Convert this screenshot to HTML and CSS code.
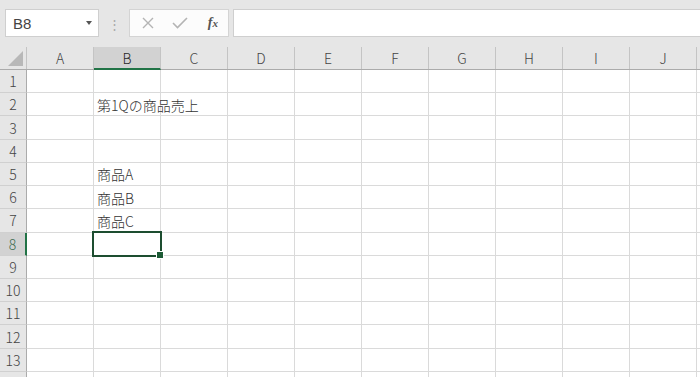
FILE: index.html
```html
<!DOCTYPE html>
<html lang="ja">
<head>
    <meta charset="UTF-8">
    <meta name="viewport" content="width=device-width, initial-scale=1.0">
    <title>Book1 - Excel</title>
    <link rel="stylesheet" href="styles.css">
</head>
<body>
    <div class="formula-bar">
        <div class="name-box">
            <span class="name-text">B8</span>
            <span class="name-arrow"></span>
        </div>
        <div class="grip">⋮</div>
        <div class="fx-tools">
            <svg class="tool-icon" width="12" height="12" viewBox="0 0 12 12">
                <path d="M1 1 L11 11 M11 1 L1 11" stroke="#b4b4b4" stroke-width="1.4" fill="none"/>
            </svg>
            <svg class="tool-icon" width="16" height="12" viewBox="0 0 16 12">
                <path d="M1 6 L5.5 10.5 L15 1" stroke="#b4b4b4" stroke-width="1.6" fill="none"/>
            </svg>
            <span class="fx-label">f<sub>x</sub></span>
        </div>
        <div class="formula-input"></div>
    </div>

    <div class="sheet">
        <div class="row head-row">
            <div class="corner"><span class="corner-tri"></span></div>
            <div class="col-head">A</div>
            <div class="col-head selected">B</div>
            <div class="col-head">C</div>
            <div class="col-head">D</div>
            <div class="col-head">E</div>
            <div class="col-head">F</div>
            <div class="col-head">G</div>
            <div class="col-head">H</div>
            <div class="col-head">I</div>
            <div class="col-head">J</div>
            <div class="col-head filler"></div>
        </div>
        <div class="row"><div class="row-head">1</div><div class="cell"></div><div class="cell"></div><div class="cell"></div><div class="cell"></div><div class="cell"></div><div class="cell"></div><div class="cell"></div><div class="cell"></div><div class="cell"></div><div class="cell"></div><div class="cell filler"></div></div>
        <div class="row"><div class="row-head">2</div><div class="cell"></div><div class="cell text">第1Qの商品売上</div><div class="cell"></div><div class="cell"></div><div class="cell"></div><div class="cell"></div><div class="cell"></div><div class="cell"></div><div class="cell"></div><div class="cell"></div><div class="cell filler"></div></div>
        <div class="row"><div class="row-head">3</div><div class="cell"></div><div class="cell"></div><div class="cell"></div><div class="cell"></div><div class="cell"></div><div class="cell"></div><div class="cell"></div><div class="cell"></div><div class="cell"></div><div class="cell"></div><div class="cell filler"></div></div>
        <div class="row"><div class="row-head">4</div><div class="cell"></div><div class="cell"></div><div class="cell"></div><div class="cell"></div><div class="cell"></div><div class="cell"></div><div class="cell"></div><div class="cell"></div><div class="cell"></div><div class="cell"></div><div class="cell filler"></div></div>
        <div class="row"><div class="row-head">5</div><div class="cell"></div><div class="cell text">商品A</div><div class="cell"></div><div class="cell"></div><div class="cell"></div><div class="cell"></div><div class="cell"></div><div class="cell"></div><div class="cell"></div><div class="cell"></div><div class="cell filler"></div></div>
        <div class="row"><div class="row-head">6</div><div class="cell"></div><div class="cell text">商品B</div><div class="cell"></div><div class="cell"></div><div class="cell"></div><div class="cell"></div><div class="cell"></div><div class="cell"></div><div class="cell"></div><div class="cell"></div><div class="cell filler"></div></div>
        <div class="row"><div class="row-head">7</div><div class="cell"></div><div class="cell text">商品C</div><div class="cell"></div><div class="cell"></div><div class="cell"></div><div class="cell"></div><div class="cell"></div><div class="cell"></div><div class="cell"></div><div class="cell"></div><div class="cell filler"></div></div>
        <div class="row"><div class="row-head selected">8</div><div class="cell"></div><div class="cell active"></div><div class="cell"></div><div class="cell"></div><div class="cell"></div><div class="cell"></div><div class="cell"></div><div class="cell"></div><div class="cell"></div><div class="cell"></div><div class="cell filler"></div></div>
        <div class="row"><div class="row-head">9</div><div class="cell"></div><div class="cell"></div><div class="cell"></div><div class="cell"></div><div class="cell"></div><div class="cell"></div><div class="cell"></div><div class="cell"></div><div class="cell"></div><div class="cell"></div><div class="cell filler"></div></div>
        <div class="row"><div class="row-head">10</div><div class="cell"></div><div class="cell"></div><div class="cell"></div><div class="cell"></div><div class="cell"></div><div class="cell"></div><div class="cell"></div><div class="cell"></div><div class="cell"></div><div class="cell"></div><div class="cell filler"></div></div>
        <div class="row"><div class="row-head">11</div><div class="cell"></div><div class="cell"></div><div class="cell"></div><div class="cell"></div><div class="cell"></div><div class="cell"></div><div class="cell"></div><div class="cell"></div><div class="cell"></div><div class="cell"></div><div class="cell filler"></div></div>
        <div class="row"><div class="row-head">12</div><div class="cell"></div><div class="cell"></div><div class="cell"></div><div class="cell"></div><div class="cell"></div><div class="cell"></div><div class="cell"></div><div class="cell"></div><div class="cell"></div><div class="cell"></div><div class="cell filler"></div></div>
        <div class="row"><div class="row-head">13</div><div class="cell"></div><div class="cell"></div><div class="cell"></div><div class="cell"></div><div class="cell"></div><div class="cell"></div><div class="cell"></div><div class="cell"></div><div class="cell"></div><div class="cell"></div><div class="cell filler"></div></div>
        <div class="row"><div class="row-head"></div><div class="cell"></div><div class="cell"></div><div class="cell"></div><div class="cell"></div><div class="cell"></div><div class="cell"></div><div class="cell"></div><div class="cell"></div><div class="cell"></div><div class="cell"></div><div class="cell filler"></div></div>
    </div>
</body>
</html>
```

FILE: styles.css
```css
* {
    margin: 0;
    padding: 0;
    box-sizing: border-box;
}

body {
    width: 700px;
    height: 377px;
    overflow: hidden;
    background: #ffffff;
    font-family: 'Noto Sans CJK JP', 'Noto Sans', sans-serif;
    color: #333;
}

/* formula bar */
.formula-bar {
    display: flex;
    align-items: center;
    height: 47px;
    padding: 0 0 1px 5px;
    background: #e6e6e6;
}

.name-box {
    display: flex;
    align-items: center;
    justify-content: space-between;
    width: 94px;
    height: 28px;
    padding: 0 6px 0 7px;
    background: #fff;
    border: 1px solid #cfcfcf;
}

.name-text {
    font-family: 'Liberation Sans', Arial, sans-serif;
    font-size: 15px;
    color: #444;
}

.name-arrow {
    width: 0;
    height: 0;
    border-left: 3.5px solid transparent;
    border-right: 3.5px solid transparent;
    border-top: 4px solid #555;
}

.grip {
    width: 30px;
    text-align: center;
    color: #a8a8a8;
    font-size: 13px;
}

.fx-tools {
    display: flex;
    align-items: center;
    width: 100px;
    height: 28px;
    padding: 0 10px 0 12px;
    gap: 18px;
    background: #fcfcfc;
    border: 1px solid #d4d4d4;
}

.tool-icon {
    display: block;
}

.fx-label {
    margin-left: auto;
    font-family: 'Liberation Serif', 'Times New Roman', serif;
    font-style: italic;
    font-weight: bold;
    font-size: 14px;
    color: #555;
}

.fx-label sub {
    font-size: 11px;
    vertical-align: 0;
}

.formula-input {
    flex: 1;
    height: 28px;
    margin-left: 4px;
    background: #fff;
    border: 1px solid #cfcfcf;
    border-right: none;
}

/* sheet */
.row {
    display: flex;
    height: 23.23px;
}

.head-row {
    height: 23px;
    background: #e6e6e6;
    border-bottom: 1px solid #ababab;
}

.corner {
    position: relative;
    width: 27px;
    border-right: 1px solid #c4c4c4;
}

.corner-tri {
    position: absolute;
    right: 3px;
    bottom: 3px;
    width: 0;
    height: 0;
    border-left: 15px solid transparent;
    border-bottom: 15px solid #b8b8b8;
}

.col-head {
    width: 67px;
    display: flex;
    align-items: center;
    justify-content: center;
    border-right: 1px solid #c4c4c4;
    font-size: 14px;
    font-weight: 300;
    color: #444;
}

.col-head.selected {
    background: #d2d2d2;
    border-bottom: 2px solid #217346;
    margin-bottom: -1px;
    color: #262626;
}

.row-head {
    width: 27px;
    display: flex;
    align-items: center;
    justify-content: center;
    background: #e6e6e6;
    border-right: 1px solid #ababab;
    border-bottom: 1px solid #d0d0d0;
    font-size: 14px;
    font-weight: 300;
    color: #444;
}

.row-head.selected {
    background: #d2d2d2;
    border-right: 2px solid #217346;
    color: #3d6b50;
}

.filler {
    flex: 1;
    width: auto;
    border-right: none;
}

.cell {
    width: 67px;
    display: flex;
    align-items: center;
    padding: 1px 0 0 3px;
    border-right: 1px solid #dadada;
    border-bottom: 1px solid #dadada;
    font-size: 14px;
    font-weight: 300;
    color: #333;
    white-space: nowrap;
}

.cell.filler {
    width: auto;
    border-right: none;
}

.cell.text {
    overflow: visible;
}

.cell.active {
    position: relative;
}

.cell.active::before {
    content: '';
    position: absolute;
    top: -2px;
    left: -2px;
    right: -2px;
    bottom: -2px;
    border: 2px solid #1d4d30;
}

.cell.active::after {
    content: '';
    position: absolute;
    right: -4px;
    bottom: -4px;
    width: 6px;
    height: 6px;
    background: #1d5b36;
    border: 1px solid #fff;
}
```
